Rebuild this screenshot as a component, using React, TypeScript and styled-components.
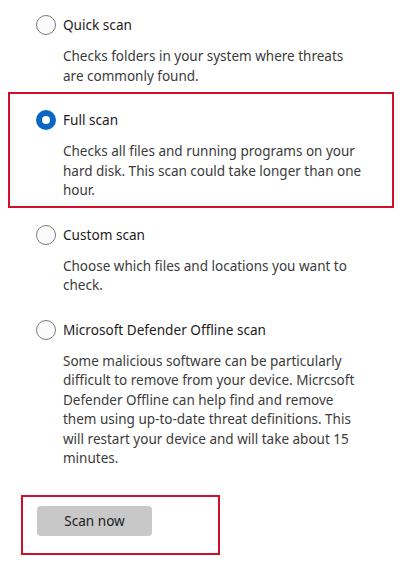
import React from "react";
import styled, { createGlobalStyle } from "styled-components";

const Global = createGlobalStyle`
  html, body { margin: 0; padding: 0; background: #ffffff; }
  body { font-family: "Noto Sans", "Open Sans", sans-serif; -webkit-font-smoothing: antialiased; }
`;

const Page = styled.div`
  width: 413px;
  height: 575px;
  box-sizing: border-box;
  padding: 15px 0 0 36px;
  display: flex;
  flex-direction: column;
  gap: 24px;
  overflow: hidden;
`;

const Option = styled.div`
  display: flex;
  flex-direction: column;
`;

const Highlight = styled.div`
  box-sizing: border-box;
  width: 386px;
  margin: -18px 0 -7px -28px;
  padding: 16px 0 5px 26px;
  border: 2px solid #d0102a;
`;

const Row = styled.label`
  display: flex;
  align-items: center;
  gap: 7px;
  height: 20px;
`;

const Radio = styled.span<{ $checked?: boolean }>`
  box-sizing: border-box;
  width: 20px;
  height: 20px;
  border-radius: 50%;
  flex: none;
  display: flex;
  align-items: center;
  justify-content: center;
  background: ${(p) => (p.$checked ? "#0a66c2" : "#fbfbfb")};
  border: ${(p) => (p.$checked ? "none" : "1px solid #7a7a7a")};
  &::after {
    content: "";
    display: ${(p) => (p.$checked ? "block" : "none")};
    width: 8px;
    height: 8px;
    border-radius: 50%;
    background: #ffffff;
  }
`;

const Label = styled.span`
  font-size: 13.6px;
  color: #1c1c1c;
  line-height: 20px;
  white-space: nowrap;
`;

const Desc = styled.p`
  margin: 12px 0 0 27px;
  font-size: 13.5px;
  line-height: 19.5px;
  color: #3b3b3b;
  white-space: nowrap;
`;

const ButtonFrame = styled.div`
  align-self: flex-start;
  box-sizing: border-box;
  width: 199px;
  height: 60px;
  margin: 2px 0 0 -15px;
  padding: 9px 0 0 14px;
  border: 2px solid #d0102a;
`;

const ScanButton = styled.button`
  width: 115px;
  height: 30px;
  border: none;
  border-radius: 4px;
  background: #c8c8c8;
  color: #1c1c1c;
  font-family: inherit;
  font-size: 13.6px;
  padding: 0;
  cursor: pointer;
`;

type ScanOption = {
  label: string;
  lines: string[];
  checked?: boolean;
  highlighted?: boolean;
};

const options: ScanOption[] = [
  {
    label: "Quick scan",
    lines: ["Checks folders in your system where threats", "are commonly found."],
  },
  {
    label: "Full scan",
    checked: true,
    highlighted: true,
    lines: [
      "Checks all files and running programs on your",
      "hard disk. This scan could take longer than one",
      "hour.",
    ],
  },
  {
    label: "Custom scan",
    lines: ["Choose which files and locations you want to", "check."],
  },
  {
    label: "Microsoft Defender Offline scan",
    lines: [
      "Some malicious software can be particularly",
      "difficult to remove from your device. Micrcsoft",
      "Defender Offline can help find and remove",
      "them using up-to-date threat definitions. This",
      "will restart your device and will take about 15",
      "minutes.",
    ],
  },
];

function OptionBody({ o }: { o: ScanOption }) {
  return (
    <>
      <Row>
        <Radio $checked={o.checked} />
        <Label>{o.label}</Label>
      </Row>
      <Desc>
        {o.lines.map((l, i) => (
          <React.Fragment key={i}>
            {l}
            {i < o.lines.length - 1 && <br />}
          </React.Fragment>
        ))}
      </Desc>
    </>
  );
}

export default function App() {
  return (
    <>
      <Global />
      <Page>
        {options.map((o) =>
          o.highlighted ? (
            <Highlight key={o.label}>
              <Option>
                <OptionBody o={o} />
              </Option>
            </Highlight>
          ) : (
            <Option key={o.label}>
              <OptionBody o={o} />
            </Option>
          )
        )}
        <ButtonFrame>
          <ScanButton>Scan now</ScanButton>
        </ButtonFrame>
      </Page>
    </>
  );
}
